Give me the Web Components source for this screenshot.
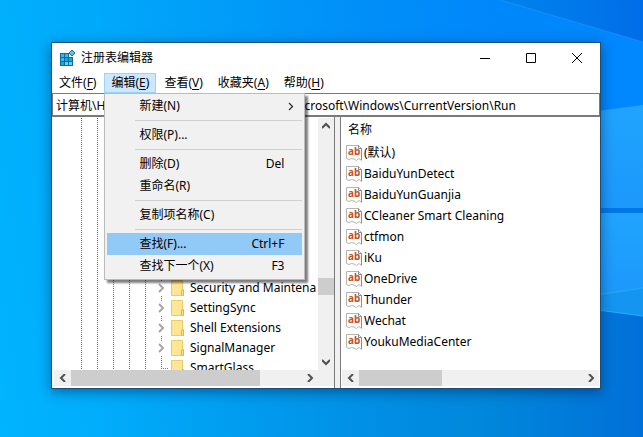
<!DOCTYPE html>
<html lang="zh-CN">
<head>
<meta charset="utf-8">
<title>注册表编辑器</title>
<style>
    html, body {
        margin: 0;
        height: 100%;
    }
    body {
        font: 12px/20px "Noto Sans", "Noto Sans CJK SC", sans-serif;
        color: #000;
    }
</style>
</head>
<body>
<desk-top>
    <reg-window caption="注册表编辑器">
        <reg-menubar slot="menu">
            <reg-menu label="文件" key="F"></reg-menu>
            <reg-menu label="编辑" key="E" open>
                <reg-menuitem label="新建(N)" submenu></reg-menuitem>
                <reg-separator></reg-separator>
                <reg-menuitem label="权限(P)..."></reg-menuitem>
                <reg-separator></reg-separator>
                <reg-menuitem label="删除(D)" shortcut="Del"></reg-menuitem>
                <reg-menuitem label="重命名(R)"></reg-menuitem>
                <reg-separator></reg-separator>
                <reg-menuitem label="复制项名称(C)"></reg-menuitem>
                <reg-separator></reg-separator>
                <reg-menuitem label="查找(F)..." shortcut="Ctrl+F" active></reg-menuitem>
                <reg-menuitem label="查找下一个(X)" shortcut="F3"></reg-menuitem>
            </reg-menu>
            <reg-menu label="查看" key="V"></reg-menu>
            <reg-menu label="收藏夹" key="A"></reg-menu>
            <reg-menu label="帮助" key="H"></reg-menu>
        </reg-menubar>
        <reg-address slot="address" path="计算机\HKEY_CURRENT_USER\SOFTWARE\Microsoft\Windows\CurrentVersion\Run"></reg-address>
        <reg-tree slot="tree">
            <reg-key expandable>Security and Maintenance</reg-key>
            <reg-key expandable>SettingSync</reg-key>
            <reg-key expandable>Shell Extensions</reg-key>
            <reg-key expandable>SignalManager</reg-key>
            <reg-key>SmartGlass</reg-key>
        </reg-tree>
        <reg-values slot="values" heading="名称">
            <reg-value>(默认)</reg-value>
            <reg-value>BaiduYunDetect</reg-value>
            <reg-value>BaiduYunGuanjia</reg-value>
            <reg-value>CCleaner Smart Cleaning</reg-value>
            <reg-value>ctfmon</reg-value>
            <reg-value>iKu</reg-value>
            <reg-value>OneDrive</reg-value>
            <reg-value>Thunder</reg-value>
            <reg-value>Wechat</reg-value>
            <reg-value>YoukuMediaCenter</reg-value>
        </reg-values>
    </reg-window>
</desk-top>

<script>
(function () {
    // clones the markup into an open shadow root
    function define(name, html, setup) {
        const tmpl = document.createElement('template');
        tmpl.innerHTML = html;
        customElements.define(name, class extends HTMLElement {
            constructor() {
                super();
                this.attachShadow({mode: 'open'}).appendChild(tmpl.content.cloneNode(true));
            }
            connectedCallback() {
                if (setup) setup(this, this.shadowRoot);
            }
        });
    }

    // desktop with the light beams behind the window
    define('desk-top', `
        <style>
            :host {
                display: grid;
                min-height: 100%;
                background: linear-gradient(80deg, #00b4ff 0%, #009ff6 45%, #0086f0 75%, #0073e2 100%);
            }
            svg, .area {
                grid-area: 1 / 1;
                min-width: 0;
                min-height: 0;
            }
            svg {
                width: 100%;
                height: 100%;
                display: block;
                contain: size;
            }
            .area {
                display: grid;
                padding: 42px 42px 48px 51px;
                z-index: 1;
            }
        </style>
        <svg viewBox="0 0 643 437" preserveAspectRatio="xMaxYMid slice" aria-hidden="true">
            <defs>
                <linearGradient id="top" x1="0" y1="0" x2="1" y2="0">
                    <stop offset="0" stop-color="#0090ff" stop-opacity="0"/>
                    <stop offset="1" stop-color="#0088ff"/>
                </linearGradient>
                <linearGradient id="corner" x1="0" y1="0" x2="1" y2="0">
                    <stop offset="0" stop-color="#0084f4" stop-opacity="0"/>
                    <stop offset="1" stop-color="#006ce8"/>
                </linearGradient>
                <linearGradient id="low" x1="0" y1="0" x2="1" y2="0">
                    <stop offset="0" stop-color="#0094e4" stop-opacity="0"/>
                    <stop offset=".7" stop-color="#0088dc"/>
                    <stop offset="1" stop-color="#0070d8"/>
                </linearGradient>
                <linearGradient id="pane" x1="0" y1="0" x2="0" y2="1">
                    <stop offset="0" stop-color="#20a4ff"/>
                    <stop offset="1" stop-color="#1c98fb"/>
                </linearGradient>
            </defs>
            <path d="M100 0H500L643 42V110H100Z" fill="url(#top)"/>
            <path d="M500 0H643V42Z" fill="url(#corner)"/>
            <path d="M500 0L643 42" stroke="#2a9dff" opacity=".5"/>
            <path d="M100 330H590V305L643 312V437H100Z" fill="url(#low)"/>
            <path d="M590 112L643 105V208H590Z" fill="url(#pane)"/>
            <path d="M590 208H643V213H590Z" fill="#0078e8"/>
            <path d="M590 213H643V288L590 296Z" fill="url(#pane)"/>
            <path d="M590 296L643 288V316L590 309Z" fill="#1495f2"/>
            <path d="M590 296L643 288M590 309L643 316" stroke="#28acfa" fill="none"/>
        </svg>
        <div class="area"><slot></slot></div>
    `);

    define('reg-window', `
        <style>
            :host {
                display: flex;
                flex-direction: column;
                min-width: 0;
                background: #fff;
                border: 1px solid #1b4e78;
                box-shadow: 0 3px 12px rgba(0, 20, 60, .45);
            }
            header {
                display: flex;
                align-items: center;
                height: 30px;
                padding-left: 7px;
            }
            h1 {
                flex: 1;
                margin: 0 0 0 5px;
                font: inherit;
            }
            header svg {
                display: block;
            }
            header button {
                display: grid;
                place-items: center;
                width: 46px;
                height: 30px;
                padding: 0;
                border: 0;
                background: none;
            }
            main {
                flex: 1;
                display: grid;
                grid-template-columns: 283px 1fr;
                gap: 5px;
                min-height: 0;
                background: #f0f0f0;
            }
            ::slotted(*) {
                min-width: 0;
                min-height: 0;
            }
        </style>
        <header>
            <svg width="17" height="18" viewBox="0 0 17 18" aria-hidden="true">
                <path d="M1 4H10V8H14V17H1Z" fill="#0a6d9e"/>
                <path d="M2 5H5V8H2ZM6 5H9V8H6ZM2 9H5V12H2Z" fill="#35bdea"/>
                <path d="M6 9H9V12H6ZM10 9H13V12H10ZM2 13H5V16H2Z" fill="#1fa5dc"/>
                <path d="M6 13H9V16H6ZM10 13H13V16H10Z" fill="#5fd2f4"/>
                <path d="M13 1L16 4L13 7L10 4Z" fill="#5ac4ea" stroke="#176f9c"/>
            </svg>
            <h1></h1>
            <button aria-label="最小化"><svg width="11" height="11"><path d="M0 5.500H10" stroke="#000"/></svg></button>
            <button aria-label="最大化"><svg width="11" height="11"><path d="M.5 .5H9.500V9.500H.5Z" fill="none" stroke="#000"/></svg></button>
            <button aria-label="关闭"><svg width="11" height="11"><path d="M0 0L10 10M10 0L0 10" fill="none" stroke="#000"/></svg></button>
        </header>
        <slot name="menu"></slot>
        <slot name="address"></slot>
        <main>
            <slot name="tree"></slot>
            <slot name="values"></slot>
        </main>
    `, (el, root) => {
        root.querySelector('h1').textContent = el.getAttribute('caption');
    });

    define('reg-menubar', `
        <style>
            :host {
                display: flex;
                gap: 1px;
                height: 20px;
            }
        </style>
        <slot></slot>
    `);

    define('reg-menu', `
        <style>
            :host {
                display: block;
                position: relative;
            }
            button {
                display: block;
                height: 20px;
                padding: 0 7px;
                border: 0;
                background: none;
                font: inherit;
                line-height: 20px;
                white-space: nowrap;
            }
            u {
                text-underline-offset: 2px;
            }
            .popup {
                display: none;
            }
            :host([open]) button {
                background: #cce8ff;
                box-shadow: inset 0 0 0 1px #99d1ff;
            }
            :host([open]) .popup {
                display: block;
                position: absolute;
                z-index: 2;
                top: 100%;
                left: 0;
                width: 201px;
                box-sizing: border-box;
                padding: 1px 2px 2px;
                background: #f1f1f1;
                border: 1px solid #bbb;
                box-shadow: 3px 3px 2px rgba(0, 0, 0, .5);
            }
        </style>
        <button><span></span>(<u></u>)</button>
        <div class="popup" role="menu"><slot></slot></div>
    `, (el, root) => {
        root.querySelector('span').textContent = el.getAttribute('label');
        root.querySelector('u').textContent = el.getAttribute('key');
    });

    define('reg-menuitem', `
        <style>
            :host {
                display: block;
            }
            /* popup buttons are slotted, so they carry their own look */
            button {
                display: flex;
                align-items: center;
                width: 100%;
                height: 22px;
                padding: 0 18px 0 32px;
                border: 0;
                background: none;
                font: inherit;
                text-align: left;
            }
            .label {
                flex: 1;
            }
            svg {
                display: none;
            }
            :host([submenu]) button {
                padding-right: 8px;
            }
            :host([submenu]) svg {
                display: block;
            }
            :host([active]) button {
                background: #91c9f7;
            }
        </style>
        <button role="menuitem">
            <span class="label"></span>
            <span class="shortcut"></span>
            <svg width="6" height="9"><path d="M1 1L4.500 4.500L1 8" fill="none" stroke="#333" stroke-width="1.300"/></svg>
        </button>
    `, (el, root) => {
        root.querySelector('.label').textContent = el.getAttribute('label');
        root.querySelector('.shortcut').textContent = el.getAttribute('shortcut') || '';
    });

    define('reg-separator', `
        <style>
            :host {
                display: block;
                height: 1px;
                margin: 3px 0 3px 28px;
                background: #d0d0d0;
            }
        </style>
    `);

    define('reg-address', `
        <style>
            :host {
                display: block;
                border: 1px solid #7a7a7a;
                border-width: 1px 1px 2px 1px;
            }
            input {
                display: block;
                width: 100%;
                height: 21px;
                box-sizing: border-box;
                padding: 0 3px;
                border: 0;
                outline: 0;
                font: inherit;
                color: inherit;
                background: #fff;
            }
        </style>
        <input type="text" aria-label="地址">
    `, (el, root) => {
        root.querySelector('input').value = el.getAttribute('path');
    });

    // before / thumb / after are flex weights along the track
    define('reg-scrollbar', `
        <style>
            :host {
                display: flex;
                height: 16px;
                background: #f0f0f0;
            }
            :host([vertical]) {
                flex-direction: column;
                width: 16px;
                height: auto;
            }
            button {
                flex: none;
                display: grid;
                place-items: center;
                width: 17px;
                height: 16px;
                padding: 0;
                border: 0;
                background: none;
            }
            :host([vertical]) button {
                width: 16px;
            }
            .back svg {
                transform: rotate(180deg);
            }
            :host([vertical]) svg {
                transform: rotate(90deg);
            }
            :host([vertical]) .back svg {
                transform: rotate(270deg);
            }
            .thumb {
                background: #cdcdcd;
            }
        </style>
        <button class="back" aria-label="后退"><svg width="8" height="8"><path d="M2 0L6 4L2 8" fill="none" stroke="#505050" stroke-width="2"/></svg></button>
        <div class="before"></div>
        <div class="thumb"></div>
        <div class="after"></div>
        <button class="next" aria-label="前进"><svg width="8" height="8"><path d="M2 0L6 4L2 8" fill="none" stroke="#505050" stroke-width="2"/></svg></button>
    `, (el, root) => {
        ['before', 'thumb', 'after'].forEach(part => {
            root.querySelector('.' + part).style.flex = (el.getAttribute(part) || 0) + ' 0 0px';
        });
    });

    define('reg-tree', `
        <style>
            :host {
                display: grid;
                grid-template-columns: 1fr 16px;
                grid-template-rows: 1fr 16px;
                padding: 1px 0 2px 2px;
                background: #fff;
                border-right: 1px solid #7a7a7a;
            }
            .keys {
                min-width: 0;
                min-height: 0;
                margin-right: 2px;
                overflow: hidden;
                display: flex;
                padding-left: 27px;
            }
            .guide {
                flex: none;
                width: 16px;
                background: repeating-linear-gradient(#777 0 1px, #fff 1px 2px) left / 1px 100% no-repeat;
            }
            .list {
                flex: none;
                padding-top: 160px;
                height: 0;
            }
            .corner {
                background: #f0f0f0;
            }
        </style>
        <div class="keys">
            <div class="guide"></div><div class="guide"></div><div class="guide"></div>
            <div class="guide"></div><div class="guide"></div>
            <div class="list"><slot></slot></div>
        </div>
        <reg-scrollbar vertical before="145" thumb="17" after="59"></reg-scrollbar>
        <reg-scrollbar before="0" thumb="189" after="41"></reg-scrollbar>
        <div class="corner"></div>
    `);

    define('reg-key', `
        <style>
            :host {
                display: flex;
                align-items: center;
                height: 20px;
                white-space: nowrap;
            }
            .node {
                width: 10px;
                height: 20px;
                background: repeating-linear-gradient(#777 0 1px, #fff 1px 2px) 0 0 / 1px 10px no-repeat,
                            repeating-linear-gradient(90deg, #777 0 1px, #fff 1px 2px) 0 10px / 8px 1px no-repeat;
            }
            .chevron {
                display: none;
            }
            :host([expandable]) .node {
                background: repeating-linear-gradient(#777 0 1px, #fff 1px 2px) 0 0 / 1px 100% no-repeat;
            }
            /* the arrow sits on top of the guide line */
            :host([expandable]) .chevron {
                display: block;
                width: 9px;
                height: 14px;
                position: relative;
                left: -4px;
                top: 3px;
                background: #fff;
            }
            .folder {
                margin-right: 6px;
            }
        </style>
        <div class="node">
            <svg class="chevron" viewBox="0 0 9 14"><path d="M2 3L6 7L2 11" fill="none" stroke="#a6a6a6" stroke-width="2"/></svg>
        </div>
        <svg class="folder" width="13" height="16" aria-hidden="true">
            <path d="M.5 .5H11.500V10L12.500 11V15.500H.5Z" fill="#ffe694" stroke="#eccb61"/>
            <path d="M10.500 15V10.500L12.500 9.500V15.500Z" fill="#ffe082" stroke="#dfb84a"/>
        </svg>
        <slot></slot>
    `);

    define('reg-values', `
        <style>
            :host {
                display: grid;
                grid-template-rows: 1fr 16px;
                padding: 1px 1px 2px 1px;
                background: #fff;
                border-left: 1px solid #7a7a7a;
            }
            .rows {
                min-height: 0;
                overflow: hidden;
            }
            h2 {
                margin: 0;
                padding: 2px 0 2px 6px;
                font: inherit;
            }
        </style>
        <div class="rows">
            <h2></h2>
            <slot></slot>
        </div>
        <reg-scrollbar before="0" thumb="83" after="139"></reg-scrollbar>
    `, (el, root) => {
        root.querySelector('h2').textContent = el.getAttribute('heading');
    });

    define('reg-value', `
        <style>
            :host {
                display: flex;
                align-items: center;
                gap: 2px;
                height: 21px;
                padding-left: 4px;
                white-space: nowrap;
            }
            text {
                font: bold 10px "Noto Sans", sans-serif;
            }
        </style>
        <svg width="16" height="16" aria-hidden="true">
            <path d="M.5 .5H12.500L15.500 3.500V15.500L13 13.500L10.500 15.500L8 14L5.500 13.500L3 14.500L.5 13.500Z" fill="#fff" stroke="#b4b4b4"/>
            <path d="M12.500 .5V3.500H15.500V15" fill="none" stroke="#8c8c8c"/>
            <text x="2" y="10" fill="#c4502e">ab</text>
        </svg>
        <slot></slot>
    `);
})();
</script>
</body>
</html>
